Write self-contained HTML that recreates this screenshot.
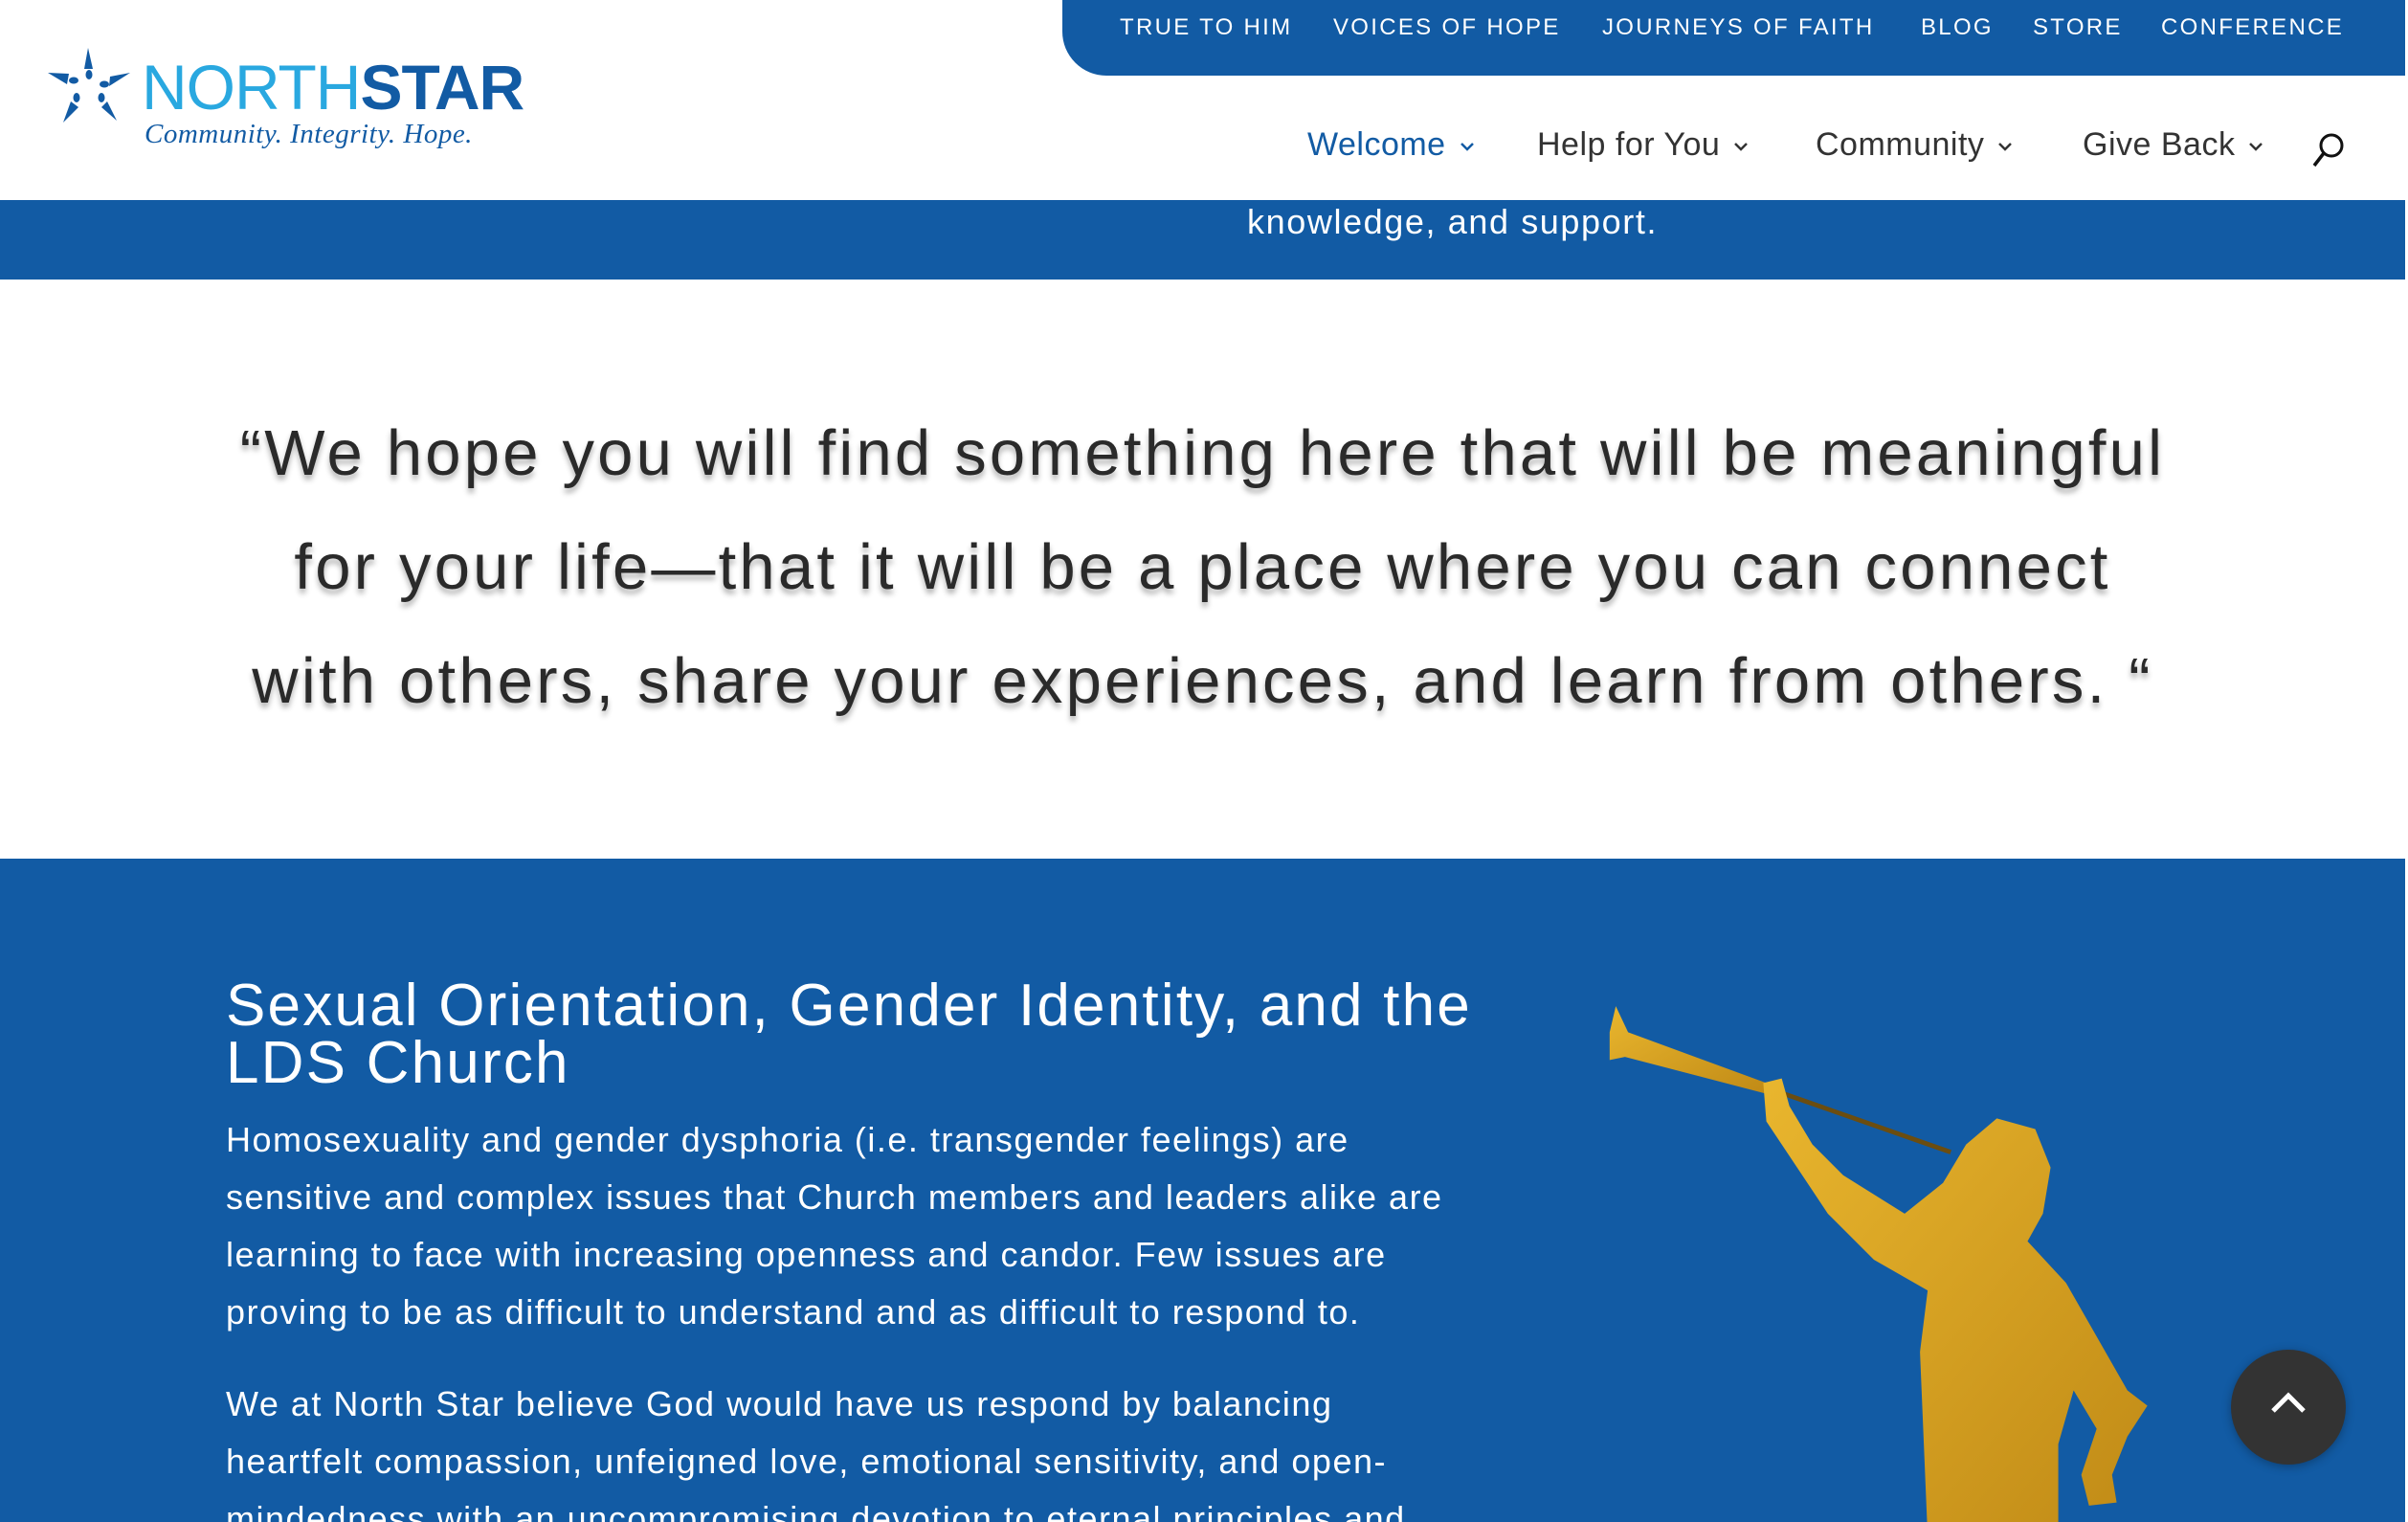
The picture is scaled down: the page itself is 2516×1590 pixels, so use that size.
<!DOCTYPE html>
<html><head><meta charset="utf-8"><style>
*{margin:0;padding:0;box-sizing:border-box}
body{width:2516px;height:1590px;overflow:hidden;background:#fff;font-family:"Liberation Sans",sans-serif;position:relative}
.abs{position:absolute;white-space:nowrap}
.tab{position:absolute;left:1110px;top:0;width:1403px;height:79px;background:#125ba4;border-bottom-left-radius:46px}
.tn{position:absolute;top:15px;color:#fff;font-size:24px;letter-spacing:2.3px}
.mn{position:absolute;top:132px;color:#333;font-size:34px;letter-spacing:0.5px}
.mn svg{margin-left:14px;vertical-align:middle}
.band{position:absolute;left:0;top:209px;width:2513px;height:83px;background:#125ba4}
.quote{position:absolute;left:0;width:2513px;text-align:center;color:#2a2a2a;font-size:67px;text-shadow:0 5px 6px rgba(0,0,0,.3);line-height:119px;top:414px;letter-spacing:3.2px}
.blue{position:absolute;left:0;top:897px;width:2513px;height:693px;background:#125ba4;overflow:hidden}
h2{position:absolute;left:236px;top:124px;color:#fff;font-weight:400;font-size:62px;line-height:60px;white-space:nowrap;letter-spacing:2.2px}
.p{position:absolute;left:236px;color:#fff;font-size:36px;line-height:60px;white-space:nowrap;letter-spacing:1.5px}
</style></head><body>
<!-- logo -->
<svg class="abs" style="left:50px;top:46px" width="90" height="84" viewBox="0 0 90 84">
<g fill="#125ba4">
<polygon points="42,4 47,26 38,26"/>
<ellipse cx="43" cy="32" rx="3.5" ry="5"/>
<polygon points="0,30 22,31 20,42"/>
<ellipse cx="27" cy="38" rx="5" ry="3.5"/>
<polygon points="65,34 86,30 64,44"/>
<ellipse cx="59" cy="42" rx="5" ry="3.5"/>
<polygon points="16,82 24,60 32,66"/>
<ellipse cx="30" cy="56" rx="3.5" ry="5"/>
<polygon points="72,80 56,66 62,60"/>
<ellipse cx="56" cy="56" rx="3.5" ry="5"/>
</g></svg>
<div class="abs" style="left:148px;top:58px;font-size:66px;line-height:66px;letter-spacing:-1px"><span style="color:#29a8e0">NORTH</span><span style="color:#125ba4;font-weight:700">STAR</span></div>
<div class="abs" style="left:151px;top:124px;font-family:'Liberation Serif',serif;font-style:italic;color:#125ba4;font-size:29px;letter-spacing:0.5px">Community. Integrity. Hope.</div>
<!-- top tab -->
<div class="tab"></div>
<div class="tn" style="left:1170px">TRUE TO HIM</div>
<div class="tn" style="left:1393px">VOICES OF HOPE</div>
<div class="tn" style="left:1674px">JOURNEYS OF FAITH</div>
<div class="tn" style="left:2007px">BLOG</div>
<div class="tn" style="left:2124px">STORE</div>
<div class="tn" style="left:2258px">CONFERENCE</div>
<!-- main nav -->
<div class="mn" style="left:1366px;color:#125ba4">Welcome<svg width="16" height="10" viewBox="0 0 16 10"><path d="M2 2l6 6 6-6" stroke="#125ba4" stroke-width="2.5" fill="none"/></svg></div>
<div class="mn" style="left:1606px">Help for You<svg width="16" height="10" viewBox="0 0 16 10"><path d="M2 2l6 6 6-6" stroke="#333" stroke-width="2.5" fill="none"/></svg></div>
<div class="mn" style="left:1897px">Community<svg width="16" height="10" viewBox="0 0 16 10"><path d="M2 2l6 6 6-6" stroke="#333" stroke-width="2.5" fill="none"/></svg></div>
<div class="mn" style="left:2176px">Give Back<svg width="16" height="10" viewBox="0 0 16 10"><path d="M2 2l6 6 6-6" stroke="#333" stroke-width="2.5" fill="none"/></svg></div>
<svg class="abs" style="left:2415px;top:138px" width="36" height="38" viewBox="0 0 36 38"><circle cx="21" cy="14" r="11" stroke="#111" stroke-width="3" fill="none"/><path d="M13 22L3 35" stroke="#111" stroke-width="3.5"/></svg>
<!-- band -->
<div class="band"><div class="abs" style="left:1303px;top:2px;color:#fff;font-size:36px;letter-spacing:1.6px">knowledge, and support.</div></div>
<!-- quote -->
<div class="quote">“We hope you will find something here that will be meaningful<br>for your life—that it will be a place where you can connect<br>with others, share your experiences, and learn from others. “</div>
<!-- blue section -->
<div class="blue">
<h2>Sexual Orientation, Gender Identity, and the<br>LDS Church</h2>
<div class="p" style="top:264px">Homosexuality and gender dysphoria (i.e. transgender feelings) are<br>sensitive and complex issues that Church members and leaders alike are<br>learning to face with increasing openness and candor. Few issues are<br>proving to be as difficult to understand and as difficult to respond to.</div>
<div class="p" style="top:540px">We at North Star believe God would have us respond by balancing<br>heartfelt compassion, unfeigned love, emotional sensitivity, and open-<br>mindedness with an uncompromising devotion to eternal principles and</div>
<svg class="abs" style="left:1669px;top:130px" width="610" height="578" viewBox="1040 640 380 360">
<defs><linearGradient id="g" x1="0" y1="0" x2="1" y2="1"><stop offset="0" stop-color="#e9b62e"/><stop offset="1" stop-color="#c08a16"/></linearGradient></defs>
<path d="M1150 708 L1270 750" stroke="#6b4d10" stroke-width="3"/>
<g fill="url(#g)">
<path d="M1048 672 L1052 655 L1060 672 L1150 705 L1150 712 L1058 688 L1048 690 Z"/>
<path d="M1148 705 L1160 702 L1165 720 L1180 745 L1200 765 L1240 790 L1265 770 L1280 745 L1300 728 L1325 735 L1335 760 L1330 790 L1320 808 L1345 835 L1365 870 L1385 905 L1398 915 L1385 935 L1375 960 L1378 978 L1360 980 L1355 960 L1365 930 L1350 905 L1340 940 L1340 1000 L1255 1000 L1250 880 L1255 840 L1220 820 L1190 790 L1170 760 L1150 730 Z"/>
</g></svg>
</div>
<!-- back to top -->
<div class="abs" style="left:2331px;top:1410px;width:120px;height:120px;border-radius:50%;background:#333;box-shadow:0 2px 10px rgba(0,0,0,.3)"></div>
<svg class="abs" style="left:2371px;top:1450px" width="40" height="30" viewBox="0 0 40 30"><path d="M4 24L20 8l16 16" stroke="#fff" stroke-width="5" fill="none"/></svg>
</body></html>
